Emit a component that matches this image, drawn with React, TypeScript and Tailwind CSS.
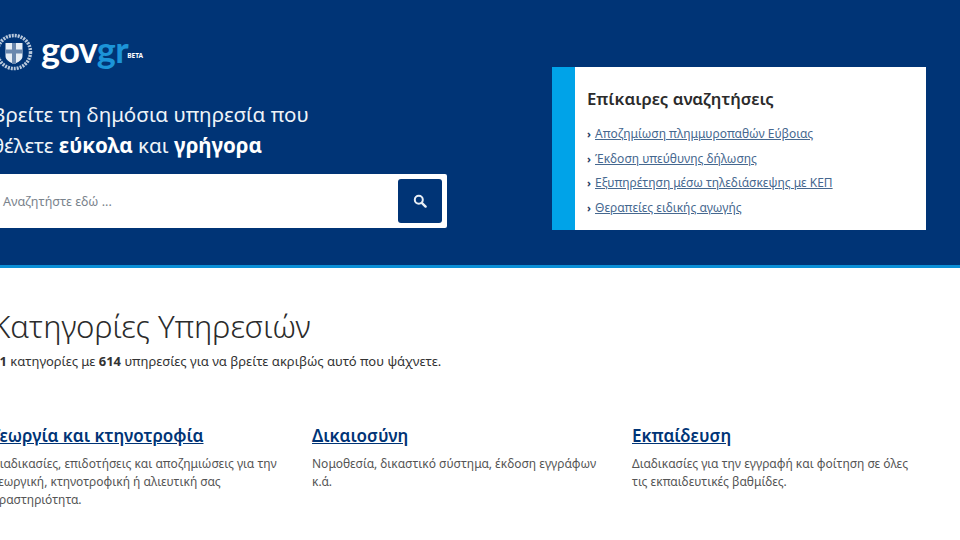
import React from 'react';

const links = [
  'Αποζημίωση πλημμυροπαθών Εύβοιας',
  'Έκδοση υπεύθυνης δήλωσης',
  'Εξυπηρέτηση μέσω τηλεδιάσκεψης με ΚΕΠ',
  'Θεραπείες ειδικής αγωγής',
];

const categories = [
  {
    title: 'Γεωργία και κτηνοτροφία',
    text: 'Διαδικασίες, επιδοτήσεις και αποζημιώσεις για την γεωργική, κτηνοτροφική ή αλιευτική σας δραστηριότητα.',
  },
  {
    title: 'Δικαιοσύνη',
    text: 'Νομοθεσία, δικαστικό σύστημα, έκδοση εγγράφων κ.ά.',
  },
  {
    title: 'Εκπαίδευση',
    text: 'Διαδικασίες για την εγγραφή και φοίτηση σε όλες τις εκπαιδευτικές βαθμίδες.',
  },
];

function Emblem() {
  return (
    <svg width="40" height="40" viewBox="0 0 40 40" className="shrink-0">
      <circle cx="20" cy="20" r="16.5" fill="none" stroke="#b9c9dc" strokeWidth="3.5" strokeDasharray="2 1" />
      <path d="M11.5 11h17v13c0 4-4 6-8.500 8-4.500-2-8.500-4-8.500-8z" fill="#e8eef5" />
      <path d="M18 11h4v21h-4zM11.500 17.500h17v4h-17z" fill="#6b88ae" />
    </svg>
  );
}

export default function App() {
  return (
    <div className="w-[960px] h-[540px] overflow-hidden bg-white font-['Noto_Sans',sans-serif]">
      <header className="h-[268px] bg-[#003476] border-b-[3px] border-[#0b8fd6] flex">
        <div className="w-[552px] shrink-0 -ml-[8px] pt-[33px]">
          <div className="flex items-center h-[38px] ml-[2px]">
            <Emblem />
            <span className="ml-[7px] text-[36px] leading-none font-bold tracking-[-0.5px] text-white font-['Lato',sans-serif] -mt-[7px]">
              gov<span className="text-[#1c94d8]">gr</span>
            </span>
            <span className="-ml-[1px] mt-[8px] text-[6.500px] font-bold text-white">BETA</span>
          </div>
          <h1 className="mt-[28px] text-[20.600px] leading-[31px] text-[#eef3f8]">
            Βρείτε τη δημόσια υπηρεσία που
            <br />
            θέλετε <strong className="font-bold text-white">εύκολα</strong> και{' '}
            <strong className="font-bold text-white">γρήγορα</strong>
          </h1>
          <div className="mt-[13px] w-[455px] h-[54px] bg-white rounded-[2px] flex items-center justify-between pr-[5px]">
            <span className="pl-[11px] pt-[2px] text-[12.600px] text-[#7a838c]">Αναζητήστε εδώ ...</span>
            <button className="w-[44px] h-[44px] rounded-[3px] bg-[#003476] flex items-center justify-center">
              <svg width="14" height="14" viewBox="0 0 14 14" fill="none" stroke="#e8eef5">
                <circle cx="5.800" cy="5.800" r="4" strokeWidth="2" />
                <path d="M8.800 8.800L12.600 12.600" strokeWidth="2.400" strokeLinecap="round" />
              </svg>
            </button>
          </div>
        </div>
        <aside className="w-[374px] h-[163px] mt-[67px] ml-[8px] bg-white border-l-[23px] border-[#00a3e8] pl-[12px] pt-[21px]">
          <h2 className="text-[16.800px] leading-[22px] font-semibold text-[#2b2b2b]">Επίκαιρες αναζητήσεις</h2>
          <ul className="mt-[15px] flex flex-col gap-[6px]">
            {links.map((link) => (
              <li key={link} className="flex items-center h-[18.500px] text-[12px] text-[#46688f]">
                <span className="mr-[4px] text-[#1f3c63] text-[11px] font-bold">›</span>
                <a href="#" className="underline">{link}</a>
              </li>
            ))}
          </ul>
        </aside>
      </header>
      <main className="-ml-[8px]">
        <h2 className="mt-[36px] text-[31.200px] leading-[44px] font-light text-[#2b2b2b]">Κατηγορίες Υπηρεσιών</h2>
        <p className="mt-[4px] text-[13px] leading-[18px] text-[#333333]">
          <strong>11</strong> κατηγορίες με <strong>614</strong> υπηρεσίες για να βρείτε ακριβώς αυτό που ψάχνετε.
        </p>
        <div className="mt-[54px] flex">
          {categories.map((c) => (
            <div key={c.title} className="w-[320px] shrink-0 pr-[26px]">
              <a href="#" className="text-[17px] leading-[24px] font-semibold text-[#003476] underline">{c.title}</a>
              <p className="mt-[7px] text-[12px] leading-[18px] text-[#555555]">{c.text}</p>
            </div>
          ))}
        </div>
      </main>
    </div>
  );
}
